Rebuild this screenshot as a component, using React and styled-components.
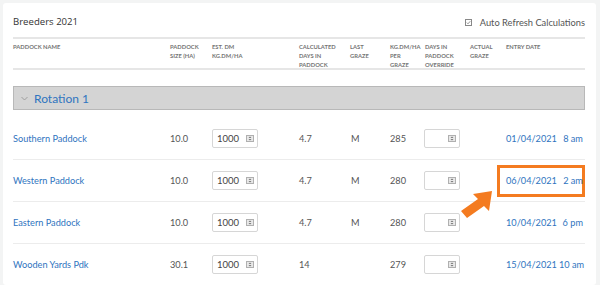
import React from "react";
import styled, { createGlobalStyle } from "styled-components";

const GlobalStyle = createGlobalStyle`
  html, body {
    margin: 0;
    padding: 0;
    background: #f3f4f4;
  }
  body {
    font-family: Lato, "Open Sans", sans-serif;
    color: #555;
  }
`;

const COLS = "157px 42px 87px 51px 40px 35px 45px 36px 1fr";

const rows = [
  { name: "Southern Paddock", size: "10.0", dm: "1000", days: "4.7", last: "M", perGraze: "285", date: "01/04/2021", time: "8 am" },
  { name: "Western Paddock", size: "10.0", dm: "1000", days: "4.7", last: "M", perGraze: "280", date: "06/04/2021", time: "2 am", highlight: true },
  { name: "Eastern Paddock", size: "10.0", dm: "1000", days: "4.7", last: "M", perGraze: "280", date: "10/04/2021", time: "6 pm" },
  { name: "Wooden Yards Pdk", size: "30.1", dm: "1000", days: "14", last: "", perGraze: "279", date: "15/04/2021", time: "10 am" },
];

const Page = styled.div`
  padding: 3px 4px 0 3px;
  height: 282px;
  overflow: hidden;
`;

const Card = styled.div`
  position: relative;
  background: #fff;
  border-radius: 3px;
  padding: 0 11px 0 10px;
  height: 100%;
`;

const TitleBar = styled.div`
  display: flex;
  align-items: center;
  justify-content: space-between;
  height: 34px;
`;

const Title = styled.h2`
  margin: 0;
  padding-top: 2px;
  font-family: "Open Sans", Lato, sans-serif;
  font-weight: 400;
  font-size: 9.6px;
  color: #333;
`;

const AutoRefresh = styled.label`
  display: flex;
  align-items: center;
  gap: 8px;
  font-size: 9.3px;
  color: #555;
  padding-top: 4px;
`;

const Header = styled.div`
  display: grid;
  grid-template-columns: ${COLS};
  border-top: 2px solid #e6e6e6;
  border-bottom: 2px solid #e6e6e6;
  padding-top: 3px;
  box-sizing: border-box;
  height: 33px;
`;

const HeadCell = styled.div`
  font-size: 5.8px;
  font-weight: 700;
  line-height: 9px;
  color: #747474;
  text-transform: uppercase;
`;

const Rotation = styled.div`
  display: flex;
  align-items: center;
  gap: 6px;
  margin-top: 16px;
  height: 22px;
  padding-left: 7px;
  background: #d4d4d4;
  border: 1px solid #b8b8b8;
  font-size: 12px;
  color: #2f74c0;
`;

const Body = styled.div`
  margin-top: 8px;
`;

const Row = styled.div`
  display: grid;
  grid-template-columns: ${COLS};
  align-items: center;
  height: 41px;
  border-bottom: 1px solid #ececec;
  font-size: 9.2px;
`;

const NameLink = styled.a`
  color: #2f74c0;
  text-decoration: none;
`;

const Cell = styled.div`
  color: #555;
  padding-left: ${(p) => p.$indent || 0}px;
`;

const NumberBox = styled.div`
  display: flex;
  align-items: center;
  justify-content: space-between;
  box-sizing: border-box;
  width: ${(p) => p.$width}px;
  height: 19px;
  margin-left: ${(p) => p.$offset || 0}px;
  padding: 0 3px 0 4px;
  border: 1px solid #d6d6d6;
  border-radius: 2px;
  color: #444;
  font-size: 9.5px;
`;

const DateCell = styled.div`
  display: flex;
  align-items: center;
  white-space: nowrap;
  color: #2f74c0;
  margin-left: ${(p) => (p.$highlight ? -9 : 0)}px;
  width: ${(p) => (p.$highlight ? "88px" : "auto")};
  height: ${(p) => (p.$highlight ? "32px" : "auto")};
  box-sizing: border-box;
  padding-left: ${(p) => (p.$highlight ? 6 : 0)}px;
  border: ${(p) => (p.$highlight ? "3px solid #f47b20" : "none")};
`;

const Time = styled.span`
  display: inline-block;
  min-width: 24px;
  margin-left: 2px;
  text-align: right;
`;

const Arrow = styled.svg`
  position: absolute;
  left: 452px;
  top: 178px;
`;

const Spinner = () => (
  <svg width="8" height="7" viewBox="0 0 8 7">
    <rect x="0.5" y="0.5" width="7" height="6" fill="#e8e8e8" stroke="#b0b0b0" />
    <path d="M2.5 3 L4 1.6 L5.5 3 Z M2.5 4 L4 5.4 L5.5 4 Z" fill="#777" />
  </svg>
);

const CheckIcon = () => (
  <svg width="7" height="7" viewBox="0 0 7 7">
    <rect x="0.5" y="0.5" width="6" height="6" fill="none" stroke="#888" />
    <path d="M1.8 3.6 L3 4.8 L5.3 2.2" fill="none" stroke="#888" strokeWidth="0.9" />
  </svg>
);

const Chevron = () => (
  <svg width="7" height="5" viewBox="0 0 7 5">
    <path d="M0.5 1 L3.5 4 L6.5 1" fill="none" stroke="#999" strokeWidth="0.9" />
  </svg>
);

const headers = [
  ["Paddock Name"],
  ["Paddock", "Size (HA)"],
  ["Est. DM", "KG.DM/HA"],
  ["Calculated", "Days in", "Paddock"],
  ["Last", "Graze"],
  ["KG.DM/HA", "Per", "Graze"],
  ["Days in", "Paddock", "Override"],
  ["Actual", "Graze"],
  ["Entry Date"],
];

export default function App() {
  return (
    <Page>
      <GlobalStyle />
      <Card>
        <TitleBar>
          <Title>Breeders 2021</Title>
          <AutoRefresh>
            <CheckIcon />
            Auto Refresh Calculations
          </AutoRefresh>
        </TitleBar>
        <Header>
          {headers.map((lines, i) => (
            <HeadCell key={i}>
              {lines.map((l, j) => (
                <div key={j}>{l}</div>
              ))}
            </HeadCell>
          ))}
        </Header>
        <Rotation>
          <Chevron />
          Rotation 1
        </Rotation>
        <Body>
          {rows.map((r) => (
            <Row key={r.name}>
              <NameLink href="#">{r.name}</NameLink>
              <Cell $indent={-2}>{r.size}</Cell>
              <NumberBox $width={46}>
                {r.dm}
                <Spinner />
              </NumberBox>
              <Cell>{r.days}</Cell>
              <Cell $indent={1}>{r.last}</Cell>
              <Cell>{r.perGraze}</Cell>
              <NumberBox $width={36} $offset={-1}>
                <span />
                <Spinner />
              </NumberBox>
              <Cell />
              <DateCell $highlight={r.highlight}>
                <span>{r.date}</span>
                <Time>{r.time}</Time>
              </DateCell>
            </Row>
          ))}
        </Body>
        <Arrow width="45" height="40" viewBox="0 0 45 40">
          <polygon
            points="37,10 18,13 23,18 6,30 12,37 29,25 34,30"
            fill="#f47b20"
          />
        </Arrow>
      </Card>
    </Page>
  );
}
